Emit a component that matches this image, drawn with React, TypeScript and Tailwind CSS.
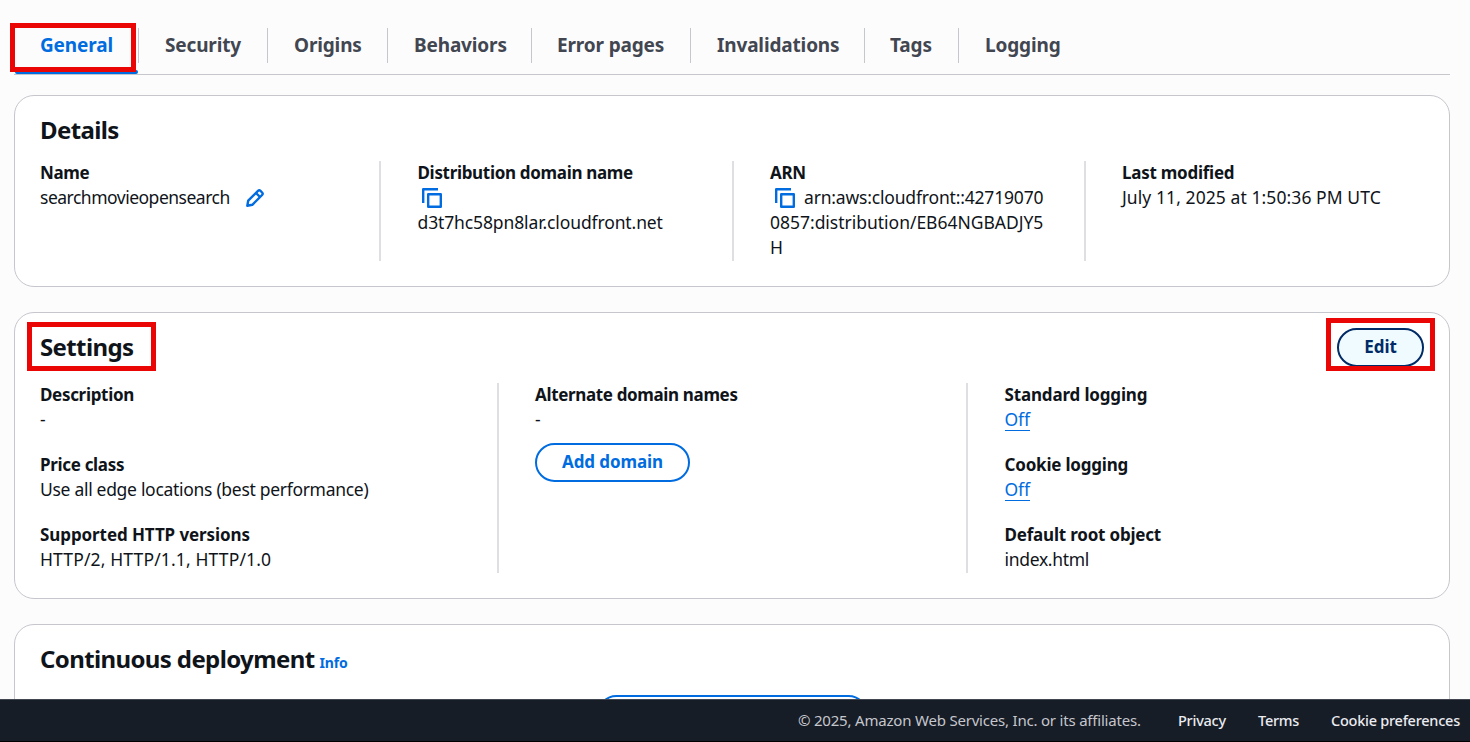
import type { ReactNode } from "react";

const tabs = [
  { name: "Security", cls: "w-[129px] pl-[26px]" },
  { name: "Origins", cls: "w-[120px] pl-[26px]" },
  { name: "Behaviors", cls: "w-[144px] pl-[26px]" },
  { name: "Error pages", cls: "w-[159px] pl-[25px]" },
  { name: "Invalidations", cls: "w-[174px] pl-[26px]" },
  { name: "Tags", cls: "w-[94px] pl-[25px]" },
  { name: "Logging", cls: "w-[130px] pl-[26px]" },
];

function CopyIcon() {
  return (
    <svg width="22" height="22" viewBox="0 0 22 22" fill="none" stroke="#006ce0" strokeWidth="2.4" className="inline-block shrink-0">
      <path d="M7.2 7.2h12.6v12.6H7.2z" strokeLinejoin="round" />
      <path d="M2.2 16V2.2H17" strokeLinejoin="round" />
    </svg>
  );
}

function PencilIcon() {
  return (
    <svg width="20" height="20" viewBox="0 0 20 20" fill="none" stroke="#006ce0" strokeWidth="2.4" strokeLinejoin="round">
      <path d="M2.3 17.7l.9-5L13 2.9a1.8 1.8 0 0 1 2.5 0l1.6 1.6a1.8 1.8 0 0 1 0 2.5L7.3 16.8z" />
      <path d="M11 5l4 4" />
    </svg>
  );
}

function Card({ className, children }: { className: string; children: ReactNode }) {
  return (
    <section className={"ml-[14px] w-[1436px] shrink-0 rounded-[20px] border border-[#c6c6cd] bg-white pl-[25px] " + className}>
      {children}
    </section>
  );
}

function Heading({ children }: { children: ReactNode }) {
  return <h2 className="text-[24px] leading-[30px] font-bold tracking-[-0.62px]">{children}</h2>;
}

function Field({ label, labelCls = "tracking-[-0.32px]", children }: { label: string; labelCls?: string; children: ReactNode }) {
  return (
    <div>
      <div className={"h-[25px] text-[17px] font-bold " + labelCls}>{label}</div>
      <div>{children}</div>
    </div>
  );
}

function OffLink() {
  return (
    <a className="inline-block h-[24px] border-b border-[#006ce0] align-top tracking-[-0.1px] text-[#006ce0]">Off</a>
  );
}

export default function App() {
  return (
    <div className="relative flex h-[742px] w-[1470px] flex-col overflow-hidden bg-[#fcfcfd] font-['Noto_Sans',sans-serif] text-[17.5px] leading-[25px] tracking-[-0.3px] text-[#0f141a]">
      <nav className="ml-[14px] flex h-[75px] w-[1436px] shrink-0 border-b border-[#c6c6cd] pt-[28px] text-[19px] font-bold tracking-[-0.15px] leading-[35px] text-[#424650]">
        <div className="relative h-[46px] w-[124px] pl-[26px] text-[#006ce0]">
          General
          <span className="absolute bottom-0 left-[1px] h-[4px] w-[123px] rounded-full bg-[#006ce0]" />
        </div>
        {tabs.map((t) => (
          <div key={t.name} className={"h-[35px] border-l border-[#c6c6cd] whitespace-nowrap " + t.cls}>
            {t.name}
          </div>
        ))}
      </nav>

      <Card className="mt-[20px] h-[192px] pt-[19px]">
        <Heading>Details</Heading>
        <div className="mt-[16px] flex h-[100px]">
          <div className="-mt-px w-[339px]">
            <Field label="Name">
              <div className="flex items-center">
                <span className="w-[190px] tracking-[-0.5px]">searchmovieopensearch</span>
                <span className="ml-[15px]"><PencilIcon /></span>
              </div>
            </Field>
          </div>
          <div className="w-[353px] border-l-2 border-[#dedee3] pl-[36.5px]">
            <div className="-mt-px">
              <Field label="Distribution domain name">
                <div className="flex h-[25px] items-center pl-[3.5px]"><CopyIcon /></div>
                <div className="tracking-[-0.12px]">d3t7hc58pn8lar.cloudfront.net</div>
              </Field>
            </div>
          </div>
          <div className="w-[352px] border-l-2 border-[#dedee3] pl-[36px]">
            <div className="-mt-px">
              <Field label="ARN">
                <div className="flex h-[25px] items-center pl-[4px]"><CopyIcon /><span className="ml-[8px] tracking-[-0.18px]">arn:aws:cloudfront::42719070</span></div>
                <div className="tracking-[-0.02px]">0857:distribution/EB64NGBADJY5</div>
                <div>H</div>
              </Field>
            </div>
          </div>
          <div className="w-[340px] border-l-2 border-[#dedee3] pl-[36px]">
            <div className="-mt-px">
              <Field label="Last modified" labelCls="tracking-[-0.25px]"><span className="tracking-[0.08px]">July 11, 2025 at 1:50:36 PM UTC</span></Field>
            </div>
          </div>
        </div>
      </Card>

      <Card className="mt-[25px] h-[287px] pt-[15px]">
        <div className="flex h-[39px] justify-between pr-[25px]">
          <div className="pt-[4px]"><Heading>Settings</Heading></div>
          <button className="h-[39px] w-[87px] rounded-full border-2 border-[#002b66] bg-[#f0fbff] pb-[2px] text-[17px] font-bold tracking-[-0.1px] text-[#002b66]">Edit</button>
        </div>
        <div className="mt-[16px] flex h-[190px]">
          <div className="-mt-px flex w-[457px] flex-col gap-[20px]">
            <Field label="Description">-</Field>
            <Field label="Price class"><span className="tracking-[-0.3px]">Use all edge locations (best performance)</span></Field>
            <Field label="Supported HTTP versions" labelCls="tracking-[-0.09px]"><span className="tracking-[0.14px]">HTTP/2, HTTP/1.1, HTTP/1.0</span></Field>
          </div>
          <div className="w-[469px] border-l-2 border-[#dedee3] pl-[36px]">
            <div className="-mt-px">
              <Field label="Alternate domain names" labelCls="tracking-[-0.35px]">-</Field>
            </div>
            <button className="mt-[11px] block h-[39px] w-[155px] rounded-full border-2 border-[#006ce0] pb-[2px] text-[17px] font-bold tracking-[-0.1px] text-[#006ce0]">Add domain</button>
          </div>
          <div className="w-[460px] border-l-2 border-[#dedee3] pl-[36.5px]">
            <div className="-mt-px flex flex-col gap-[20px]">
              <Field label="Standard logging" labelCls="tracking-[-0.16px]"><OffLink /></Field>
              <Field label="Cookie logging" labelCls="tracking-[-0.2px]"><OffLink /></Field>
              <Field label="Default root object" labelCls="tracking-[-0.2px]">index.html</Field>
            </div>
          </div>
        </div>
      </Card>

      <Card className="mt-[25px] h-[240px] pt-[19px]">
        <div className="flex items-baseline">
          <Heading>Continuous deployment</Heading>
          <a className="ml-[5px] text-[14px] font-bold tracking-[-0.1px] text-[#006ce0]">Info</a>
        </div>
        <div className="mt-[20px] mr-[25px] flex justify-center">
          <div className="h-[39px] w-[271px] rounded-full border-2 border-[#006ce0]" />
        </div>
      </Card>

      <footer className="absolute inset-x-0 bottom-0 flex h-[43px] border-t border-b border-t-[#424650] border-b-black bg-[#161d26] text-[14.5px] leading-[41px] tracking-[-0.25px] whitespace-nowrap text-[#ebebf0]">
        <span className="ml-[798px] w-[380px] text-[15px] tracking-[-0.2px] text-[#c6c6cd]">© 2025, Amazon Web Services, Inc. or its affiliates.</span>
        <span className="w-[80px] font-medium">Privacy</span>
        <span className="w-[73px] font-medium">Terms</span>
        <span className="font-medium">Cookie preferences</span>
      </footer>

      <div className="absolute top-[23px] left-[10px] h-[49px] w-[126px] border-[5px] border-[#eb0606]" />
      <div className="absolute top-[322px] left-[27px] h-[49px] w-[129px] border-[5px] border-[#eb0606]" />
      <div className="absolute top-[318px] left-[1326px] h-[53px] w-[109px] border-[5px] border-[#eb0606]" />
    </div>
  );
}
